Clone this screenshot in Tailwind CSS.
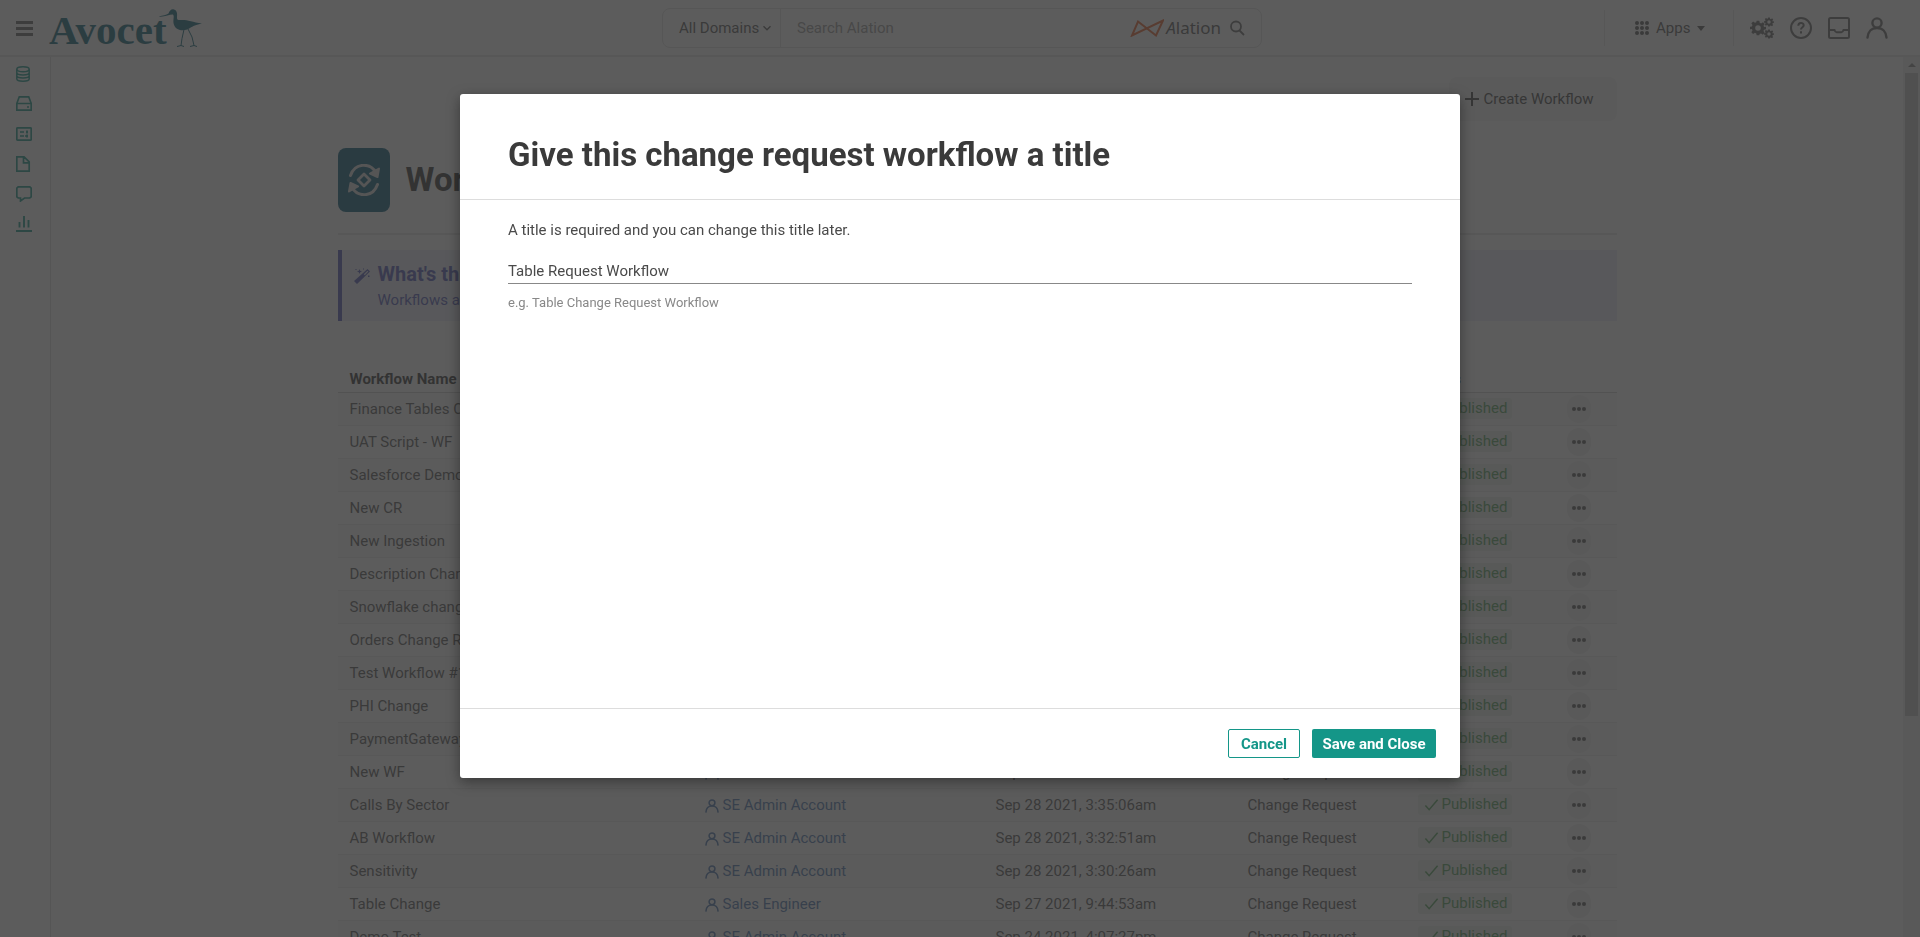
<!DOCTYPE html>
<html lang="en">
<head>
<meta charset="utf-8">
<meta name="viewport" content="width=device-width, initial-scale=1">
<title>Workflows</title>
<script src="https://cdn.jsdelivr.net/npm/@tailwindcss/browser@4"></script>
</head>
<body class="flex h-screen flex-col overflow-hidden bg-white font-['Roboto',sans-serif] text-[15px] text-[#555]">

<svg class="hidden" aria-hidden="true">
  <symbol id="user" viewBox="0 0 22 22"><g fill="none" stroke="currentColor" stroke-width="2.4" stroke-linecap="round"><circle cx="11" cy="6" r="4.6"/><path d="M1.5 20.6c.4-5.6 4-9.6 9.5-9.6s9.100 4 9.500 9.600"/></g></symbol>
  <symbol id="check" viewBox="0 0 16 14"><path d="M1.500 7.500l4 4.500L14.500 1.500" fill="none" stroke="currentColor" stroke-width="1.600"/></symbol>
  <symbol id="gear" viewBox="0 0 24 24"><path fill="currentColor" fill-rule="evenodd" d="M10 1h4l.6 3.300 2 .8 2.800-1.900 2.600 2.700-1.700 2.700.8 2L24 10.200v3.800l-3 .6-.8 2 1.700 2.700-2.600 2.700-2.800-1.800-2 .8L14 23h-4l-.6-2.900-2-.8L4.600 21 2 18.400l1.700-2.800-.8-2L0 13.800V10.200l2.900-.6.8-2L2 4.900l2.700-2.700 2.700 1.900 2-.8zM12 7.800a4.200 4.200 0 1 0 0 8.400 4.200 4.200 0 0 0 0-8.400z"/></symbol>
</svg>

<header class="grid h-[57px] shrink-0 grid-cols-[1fr_600px_1fr] items-center border-b-2 border-[#e4e4e4] pt-px pr-3 pl-4">
  <div class="flex items-center gap-4">
    <button aria-label="Menu" class="flex w-[17px] flex-col gap-[3px] text-[#666]">
      <span class="h-[3px] w-full bg-current"></span><span class="h-[3px] w-full bg-current"></span><span class="h-[3px] w-full bg-current"></span>
    </button>
    <a href="#" class="flex items-start text-[#0c6478]" aria-label="Avocet">
      <span class="pt-1 font-['Liberation_Serif',serif] text-[41px] leading-[44px] font-bold">Avocet</span>
      <svg class="-ml-[10px] mt-1 h-[40px] w-[48px]" viewBox="0 0 48 40" fill="currentColor"><path d="M2 8.200C6 7.800 9 7 11.500 5.500 12.500 2.500 14.500.8 17 1.500c3.500 1.200 3.200 4.500 3 8.500 0 2 1.500 2.200 4.500 2 6-.2 11 2 20.500 3.600-6 1.500-9 2.500-12 4.500-4 2.500-9 3-12.500 1-3.500-2-4.500-6-4-9.500.4-2.500.4-5-1-5-3 0-8 2.500-13.500 2z"/><path d="M27 21.500l-2 9-1 7-4 1M24 37.500l3 1M31 21l4 8 2 8.500-4 1M37 37.500l3 1" fill="none" stroke="currentColor" stroke-width="1"/></svg>
    </a>
  </div>

  <form class="flex h-[40px] items-center rounded-lg border border-[#dedede]">
    <button type="button" class="flex h-full w-[118px] items-center gap-1 border-r border-[#dedede] pl-4 whitespace-nowrap">All Domains
      <svg class="size-2" viewBox="0 0 8 8" fill="none" stroke="currentColor" stroke-width="1.300"><path d="M.5 2.200L4 5.800l3.500-3.600"/></svg>
    </button>
    <input type="search" aria-label="Search Alation" placeholder="Search Alation" class="min-w-0 flex-1 pl-4 outline-none placeholder:text-[#999]">
    <span class="flex items-center gap-[2px] text-[#555]">
      <svg class="h-[18px] w-[34px]" viewBox="0 0 34 18" fill="none" stroke="#e8622a" stroke-width="2"><path d="M8 2.500l18 14L33 1.500 2 16.500z"/></svg>
      <span class="font-['Noto_Sans',sans-serif] text-[17px]"><i class="font-['Noto_Sans',sans-serif]">A</i>lation</span>
    </span>
    <button type="button" aria-label="Search" class="mr-4 ml-2">
      <svg class="size-4" viewBox="0 0 16 16" fill="none" stroke="#666" stroke-width="1.800"><circle cx="7" cy="6.500" r="5"/><path d="M10.500 10.500L15 15"/></svg>
    </button>
  </form>

  <nav class="flex items-center justify-end pr-5 text-[#666]">
    <div class="flex h-9 w-[130px] items-center border-x border-[#e4e4e4] pl-[30px]">
      <button class="flex items-center gap-[7px] text-[#555]">
        <svg class="size-[14px]" viewBox="0 0 14 14" fill="currentColor"><circle cx="2" cy="2" r="2"/><circle cx="7" cy="2" r="2"/><circle cx="12" cy="2" r="2"/><circle cx="2" cy="7" r="2"/><circle cx="7" cy="7" r="2"/><circle cx="12" cy="7" r="2"/><circle cx="2" cy="12" r="2"/><circle cx="7" cy="12" r="2"/><circle cx="12" cy="12" r="2"/></svg>
        Apps
        <svg class="h-[5px] w-2" viewBox="0 0 8 5" fill="currentColor"><path d="M0 0h8L4 5z"/></svg>
      </button>
    </div>
    <div class="flex items-center gap-4 pl-4">
      <button aria-label="Settings"><svg class="h-[22px] w-6" viewBox="0 0 24 22"><use href="#gear" x="0" y="3" width="16" height="16"/><use href="#gear" x="14" y="0" width="10" height="10"/><use href="#gear" x="14" y="12" width="10" height="10"/></svg></button>
      <button aria-label="Help"><svg class="size-[22px]" viewBox="0 0 22 22" fill="none" stroke="currentColor" stroke-width="2"><circle cx="11" cy="11" r="10"/><path d="M8.300 8.700c0-3.600 5.400-3.600 5.400-.4 0 2-2.700 2-2.700 4.200M11 14.300v2.200"/></svg></button>
      <button aria-label="Inbox"><svg class="size-[22px]" viewBox="0 0 22 22" fill="none" stroke="currentColor" stroke-width="2"><rect x="1" y="1" width="20" height="20" rx="1.500"/><path d="M1 13h5.500c.5 1.500 1 2.300 2 2.300h5c1 0 1.500-.8 2-2.300H21"/></svg></button>
      <button aria-label="Account"><svg class="size-[22px]"><use href="#user"/></svg></button>
    </div>
  </nav>
</header>

<div class="flex min-h-0 flex-1">
  <nav class="flex w-[51px] shrink-0 flex-col gap-[14px] border-r border-[#dcdcdc] pt-[9px] pl-4 text-[#149688]">
    <a href="#" aria-label="Sources"><svg class="size-4" viewBox="0 0 16 16" fill="none" stroke="currentColor" stroke-width="1.500"><ellipse cx="7" cy="3.300" rx="6.200" ry="2.500"/><path d="M.8 3.300v9.400c0 3.300 12.400 3.300 12.400 0V3.300M.8 6.400c0 3.300 12.400 3.300 12.400 0M.8 9.500c0 3.300 12.400 3.300 12.400 0"/></svg></a>
    <a href="#" aria-label="Storage"><svg class="size-4" viewBox="0 0 16 16" fill="none" stroke="currentColor" stroke-width="1.700"><path d="M.8 7.500h14.400v6.700H.8V7.500L3.300.8h9.400l2.500 6.700M11 11h2"/></svg></a>
    <a href="#" aria-label="Glossary"><svg class="size-4" viewBox="0 0 16 16" fill="none" stroke="currentColor" stroke-width="1.700"><rect x=".8" y="1.800" width="14.400" height="12.400" rx=".8"/><path d="M4 6h4M4 10h4M10 6h2M9 10h3M11 4.500v3M11 8.500v3"/></svg></a>
    <a href="#" aria-label="Articles"><svg class="size-4" viewBox="0 0 16 16" fill="none" stroke="currentColor" stroke-width="1.700"><path d="M1.800.8H8l5.200 5v9.400H.8V.8h1M7.500.8v6h5.700"/></svg></a>
    <a href="#" aria-label="Conversations"><svg class="size-4" viewBox="0 0 16 16" fill="none" stroke="currentColor" stroke-width="1.700"><path d="M2.200.8h11.600l1.400 1.400v8.600L13.800 12H8.500l-4 3v-3H2.200L.8 10.800V2.200z"/></svg></a>
    <a href="#" aria-label="Reports"><svg class="size-4" viewBox="0 0 16 16" fill="none" stroke="currentColor" stroke-width="1.900"><path d="M0 15h16M3.500 6v5.500M8 0v11.500M12.500 4v7.500"/></svg></a>
  </nav>

  <main class="min-w-0 flex-1 overflow-hidden">
    <div class="mx-auto flex max-w-[1279px] flex-col pt-5">
      <button class="flex h-11 w-[168px] items-center gap-[5px] self-end rounded-lg bg-[#f4f4f4] pl-4 text-[#444]">
        <svg class="size-[14px]" viewBox="0 0 14 14" stroke="currentColor" stroke-width="2"><path d="M7 0v14M0 7h14"/></svg>Create Workflow
      </button>
      <div class="mt-[27px] flex items-center gap-4 border-b-2 border-[#e4e4e4] pb-[21px]">
        <span class="flex h-16 w-[52px] items-center justify-center rounded-lg bg-[#06597a] text-[#ddd]">
          <svg class="size-8" viewBox="0 0 32 32" fill="none" stroke="currentColor" stroke-width="3" stroke-linecap="round" stroke-linejoin="round"><path d="M2.500 11.500C7-1.500 22-1.500 28 8.500M29.500 20.500C25 33.500 10 33.500 4 23.500"/><path fill="currentColor" stroke-width="2" d="M31 4.500l-1.500 8.500L22 9.500zM1 27.500L2.500 19l7.500 3.500z"/><path stroke-width="2.800" d="M16 10l6 6-6 6-6-6z"/></svg>
        </span>
        <h1 class="text-[33px] leading-[40px] font-bold text-[#333]">Workflows</h1>
      </div>
      <section class="mt-[15px] flex h-[71px] gap-2 border-l-4 border-[#5058b8] bg-[#ebecf8] pt-3 pl-3 text-[#5058b8]">
        <svg class="mt-[6px] size-4" viewBox="0 0 16 16" fill="currentColor"><path fill-rule="evenodd" d="M13.500 1L16 3.500 3 16l-3-3zM13.400 2.700L9.800 6.200l1 1 3.600-3.600z"/><path d="M5.500 1l.7 1.800L8 3.500l-1.800.7L5.500 6l-.7-1.800L3 3.500l1.800-.7zM1.500 1h1v1h-1zM9 .5h1v1H9zM14 7.500h1.500V9H14z"/></svg>
        <div>
          <h2 class="text-[20px] leading-6 font-bold">What's this?</h2>
          <p class="leading-7">Workflows are</p>
        </div>
      </section>

      <table class="mt-[43px] w-full table-fixed border-collapse text-left">
        <colgroup><col class="w-[355px]"><col class="w-[291px]"><col class="w-[252px]"><col class="w-[170px]"><col class="w-[149px]"><col></colgroup>
        <thead><tr class="h-7 border-b border-[#ccc] text-[#333]"><th class="px-3 pt-[2px]">Workflow Name</th><th></th><th></th><th></th><th class="px-3 pt-[2px]">Status</th><th><span class="sr-only">Actions</span></th></tr></thead>
        <tbody id="rows"></tbody>
      </table>
    </div>
  </main>

  <div class="flex w-[17px] shrink-0 flex-col items-center bg-[#f1f1f1]" aria-hidden="true">
    <svg class="mt-[6px] h-[4px] w-2 shrink-0" viewBox="0 0 8 4" fill="#888"><path d="M0 4h8L4 0z"/></svg>
    <div class="mt-[6px] h-[643px] w-[13px] bg-[#c1c1c1]"></div>
  </div>
</div>

<div class="fixed inset-0 z-10 flex items-start justify-center bg-[#333]/80 px-4 pt-[94px]">
  <div role="dialog" aria-modal="true" aria-labelledby="dialog-title" class="w-full max-w-[1000px] rounded-[3px] bg-white text-[#4a4a4a] shadow-[0_4px_14px_rgba(0,0,0,0.4)]">
    <div class="border-b border-[#ddd] px-12 pt-[41px] pb-6">
      <h2 id="dialog-title" class="text-[33px] leading-[40px] font-bold text-[#3a3a3a]">Give this change request workflow a title</h2>
    </div>
    <form id="title-form" class="min-h-[508px] px-12 pt-5">
      <label for="workflow-title" class="block leading-5">A title is required and you can change this title later.</label>
      <input id="workflow-title" type="text" value="Table Request Workflow" aria-describedby="hint" class="mt-[18px] block h-[26px] w-full border-b border-[#888] outline-none">
      <p id="hint" class="mt-[9px] text-[13px] leading-5 text-[#888]">e.g. Table Change Request Workflow</p>
    </form>
    <div class="flex justify-end gap-3 border-t border-[#ddd] px-6 py-5">
      <button class="h-[29px] w-[72px] rounded-[2px] border border-[#149688] pt-px font-bold text-[#149688]">Cancel</button>
      <button form="title-form" type="button" class="h-[29px] w-[124px] rounded-[2px] bg-[#149688] pt-px font-bold whitespace-nowrap text-white">Save and Close</button>
    </div>
  </div>
</div>

<script>
const rows = [
  ['Finance Tables C'], ['UAT Script - WF'], ['Salesforce Demo'], ['New CR'], ['New Ingestion'],
  ['Description Change'], ['Snowflake change'], ['Orders Change R'], ['Test Workflow #1'], ['PHI Change'],
  ['PaymentGateway'],
  ['New WF', 'SE Admin Account', 'Sep 28 2021'],
  ['Calls By Sector', 'SE Admin Account', 'Sep 28 2021, 3:35:06am'],
  ['AB Workflow', 'SE Admin Account', 'Sep 28 2021, 3:32:51am'],
  ['Sensitivity', 'SE Admin Account', 'Sep 28 2021, 3:30:26am'],
  ['Table Change', 'Sales Engineer', 'Sep 27 2021, 9:44:53am'],
  ['Demo Test', 'SE Admin Account', 'Sep 24 2021, 4:07:27pm'],
];
document.getElementById('rows').innerHTML = rows.map(([name, author, date]) => `
  <tr class="h-[33px] border-b border-[#ebebeb] odd:bg-[#fafafa]">
    <td class="px-3 pt-[2px]">${name}</td>
    <td class="px-3 pt-[2px]">${author ? `<a href="#" class="flex items-center gap-1 text-[#4a76b0]"><svg class="size-[14px]"><use href="#user"/></svg>${author}</a>` : ''}</td>
    <td class="px-3 pt-[2px]">${date || ''}</td>
    <td class="px-3 pt-[2px]">Change Request</td>
    <td class="px-3"><span class="flex h-[21px] w-[94px] items-center gap-[3px] rounded-[3px] bg-[#e8f0e8] pl-[6px] text-[#55a05c]"><svg class="h-[14px] w-[15px]"><use href="#check"/></svg>Published</span></td>
    <td class="pl-3"><button aria-label="More actions" class="flex h-7 w-6 items-center justify-center rounded-full bg-[#eee] text-[#555]"><svg class="h-1 w-[14px]" viewBox="0 0 14 4" fill="currentColor"><circle cx="2" cy="2" r="2"/><circle cx="7" cy="2" r="2"/><circle cx="12" cy="2" r="2"/></svg></button></td>
  </tr>`).join('');
</script>
</body>
</html>
